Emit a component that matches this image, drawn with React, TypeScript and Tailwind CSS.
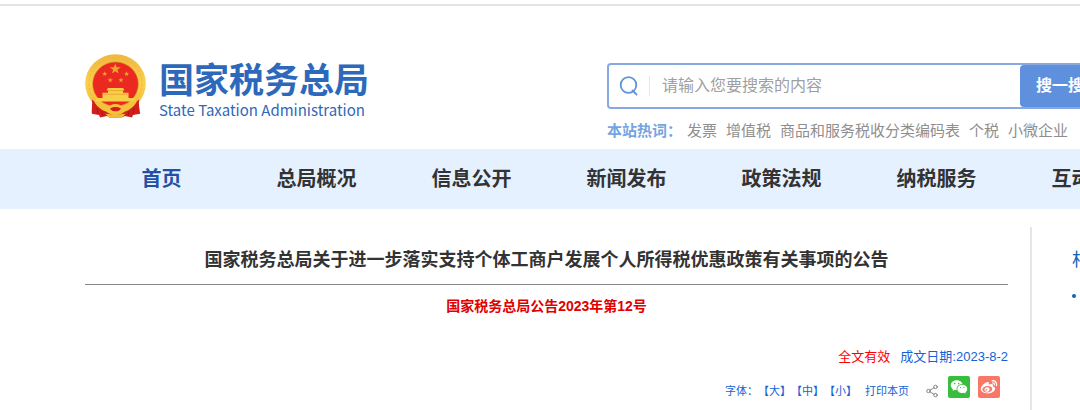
import { ReactElement } from "react";
import { Share2 } from "lucide-react";
import { RiWechatFill, RiWeiboFill } from "react-icons/ri";

const NAV_ITEMS = ["首页", "总局概况", "信息公开", "新闻发布", "政策法规", "纳税服务", "互动交流"];
const HOT_WORDS = ["发票", "增值税", "商品和服务税收分类编码表", "个税", "小微企业"];
const FONT_SIZES = ["大", "中", "小"];

const STAR = "M0 -5 L1.2 -1.6 L4.8 -1.5 L1.9 0.6 L2.9 4 L0 2 L-2.9 4 L-1.9 0.6 L-4.8 -1.5 L-1.2 -1.6 Z";

function Emblem(): ReactElement {
  return (
    <svg viewBox="5 4 61 66" preserveAspectRatio="none" className="h-16 w-[61px] shrink-0" aria-hidden="true">
      <defs>
        <linearGradient id="gold" x1="0" y1="0" x2="0" y2="1">
          <stop offset="0" stopColor="#efb840" />
          <stop offset="0.5" stopColor="#fbd04a" />
          <stop offset="1" stopColor="#f3bb35" />
        </linearGradient>
      </defs>
      <circle cx="35.5" cy="34.5" r="30.3" fill="url(#gold)" />
      <circle cx="35.5" cy="34.5" r="26.5" fill="none" stroke="#edb43a" strokeWidth="0.8" strokeDasharray="3 2" />
      <circle cx="35.5" cy="35" r="22.8" fill="#ea2a20" stroke="#d98a22" strokeWidth="0.6" />
      <g fill="#e9a52c">
        <path d={STAR} transform="translate(35.3 19.5) scale(1.15)" />
        <path d={STAR} transform="translate(24.7 24.6) scale(0.55)" />
        <path d={STAR} transform="translate(46.6 24.6) scale(0.55)" />
        <path d={STAR} transform="translate(30.2 31) scale(0.55)" />
        <path d={STAR} transform="translate(41 31) scale(0.55)" />
      </g>
      <path d="M28 39h15l1.5 2.500h-18zM28 41.500h15v2.500h5.500v5.500h6l1.500 3.500h-41l1.500-3.500h6v-5.500h5.500z" fill="#f8cf48" />
      <path d="M27 41.700h17M23 45.500h25" stroke="#e08c25" strokeWidth="0.6" />
      <path d="M12 51l6 5 8 5h19l8-5 6-5c-.5 5 .5 10 1.200 14.500l-7.200 1.500-1 2.500-7-1.500-3.500 1.500h-12L27 68l-7 1.500-1-2.500-7.200-1.500C11.500 61 12.500 56 12 51z" fill="#d1201c" />
      <path d="M14 53c6 1 11 3 14 6.500c1.500-2.500 4-4 7.500-4s6 1.500 7.500 4c3-3.500 8-5.500 14-6.500c-3 5-7 9-12.500 10.500c-2.500 2.500-6 3.500-9 3.500s-6.500-1-9-3.500C21 62 17 58 14 53z" fill="#f5c23c" />
      <path d="M30 60.500c2-2.500 9-2.500 11 0c-2 3.500-9 3.500-11 0z" fill="#d1201c" />
      <path d="M25.500 65.500l7 1 3-1 3 1 7-1-3.500 4h-13z" fill="#f4bd38" />
      <path d="M17 60l1 6M54 60l-1 6M22 63l1 5M49 63l-1 5" fill="none" stroke="#a91216" strokeWidth="0.9" />
    </svg>
  );
}

function Logo(): ReactElement {
  return (
    <a href="#" className="mt-12 flex gap-[13px] text-[#2e68ba]">
      <Emblem />
      <span className="flex flex-col pt-2">
        <span className="text-[35px] leading-[38px] font-bold">国家税务总局</span>
        <span className="font-['Noto_Sans_CJK_SC'] text-[15px] leading-[20px]">
          State Taxation Administration
        </span>
      </span>
    </a>
  );
}

function SearchIcon(): ReactElement {
  return (
    <svg viewBox="0 0 20 20" className="size-5 shrink-0" fill="none" stroke="#5f95dc" strokeWidth="1.800" aria-hidden="true">
      <circle cx="9.500" cy="9" r="7.800" />
      <path d="M13.500 14.500l4 4" strokeLinecap="round" />
    </svg>
  );
}

function Search(): ReactElement {
  return (
    <div className="mt-[57px] w-[495px]">
      <form className="flex h-[46px] rounded-[4px] border-2 border-[#86aadf]" onSubmit={(e) => e.preventDefault()}>
        <label htmlFor="search" className="flex items-center pl-[10px]" aria-label="搜索">
          <SearchIcon />
          <span className="ml-[10px] h-5 border-l border-gray-200" />
        </label>
        <input
          id="search"
          type="text"
          placeholder="请输入您要搜索的内容"
          className="min-w-0 flex-1 pl-3 text-[16px] outline-none placeholder:text-[#a0a0a0]"
        />
        <button type="submit" className="w-20 rounded-l-[4px] bg-[#5f90de] text-[16px] font-bold text-white">
          搜一搜
        </button>
      </form>
      <div className="mt-3 flex gap-[9px] text-[15px] leading-5 whitespace-nowrap text-[#8e8e8e]">
        <span className="-mr-1 font-bold text-[#74a5e0]">本站热词：</span>
        {HOT_WORDS.map((word) => (
          <a key={word} href="#">{word}</a>
        ))}
      </div>
    </div>
  );
}

function Nav(): ReactElement {
  return (
    <nav className="flex h-[60px] items-center bg-[#e5f1ff] px-[84px]">
      {NAV_ITEMS.map((item, i) => (
        <a
          key={item}
          href="#"
          className={`w-[155px] shrink-0 text-center text-[20px] leading-7 font-bold ${i === 0 ? "text-[#2450a4]" : "text-[#333333]"}`}
        >
          {item}
        </a>
      ))}
    </nav>
  );
}

function Toolbar(): ReactElement {
  return (
    <div className="mt-2 flex items-center justify-end pr-2 text-[11px] leading-4 text-[#1462d5]">
      <span className="pt-2">字体：</span>
      {FONT_SIZES.map((size) => (
        <button key={size} type="button" className="pt-2">【{size}】</button>
      ))}
      <a href="#" className="ml-2 pt-2">打印本页</a>
      <Share2 size={14} strokeWidth={1.5} className="mt-2 ml-4 text-[#777777]" />
      <a href="#" aria-label="微信" className="ml-[9px] rounded-[2px] bg-[#38be3d] p-[2px] text-white">
        <RiWechatFill size={18} />
      </a>
      <a href="#" aria-label="微博" className="ml-2 rounded-[2px] bg-[#f87767] p-[2px] text-white">
        <RiWeiboFill size={18} />
      </a>
    </div>
  );
}

function Article(): ReactElement {
  return (
    <article className="flex-1 pr-[22px] pb-3 text-center">
      <h1 className="border-b border-[#888888] pt-[21px] pb-3 text-[18px] leading-6 font-bold text-[#333333]">
        国家税务总局关于进一步落实支持个体工商户发展个人所得税优惠政策有关事项的公告
      </h1>
      <p className="mt-[11px] text-[14px] leading-5 font-bold text-[#e00000]">国家税务总局公告2023年第12号</p>
      <p className="mt-[31px] flex justify-end gap-[10px] text-[13px] leading-5 text-[#1462d5]">
        <span className="text-[#ff0000]">全文有效</span>
        <span>成文日期:2023-8-2</span>
      </p>
      <Toolbar />
    </article>
  );
}

export default function App(): ReactElement {
  return (
    <div className="overflow-x-hidden bg-white font-['Liberation_Sans','Noto_Sans_CJK_SC',sans-serif]">
      <div className="min-w-[1187px] pt-1">
        <header className="flex h-[145px] items-start justify-between border-t-2 border-[#e4e4e4] px-[85px]">
          <Logo />
          <Search />
        </header>
        <Nav />
        <main className="mt-[18px] flex px-[85px]">
          <Article />
          <aside className="w-[72px] border-l-2 border-[#e5e5e5] pt-[21px] pl-10 whitespace-nowrap text-[#1462b5]">
            <h2 className="text-[18px] leading-6">相关</h2>
            <ul className="mt-[22px]">
              <li className="size-1 rounded-full bg-[#1462b5]" />
            </ul>
          </aside>
        </main>
      </div>
    </div>
  );
}
